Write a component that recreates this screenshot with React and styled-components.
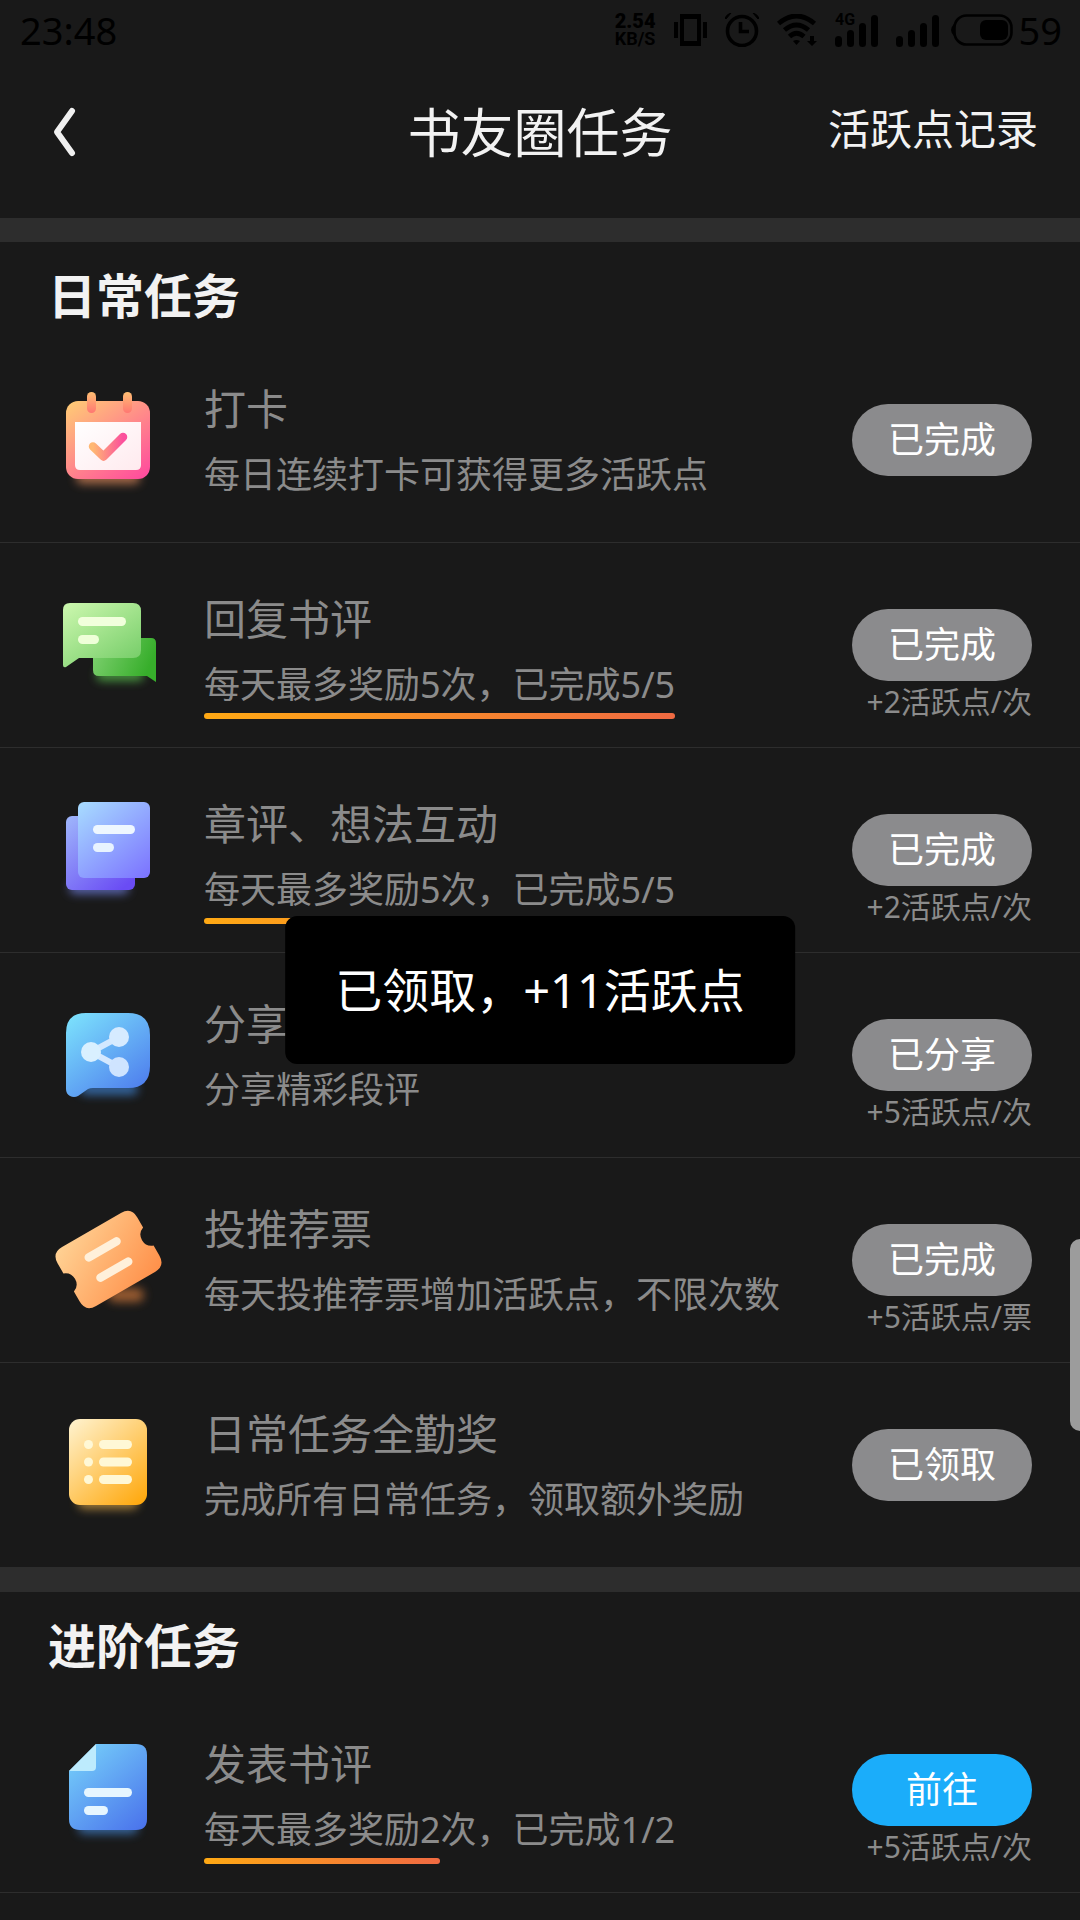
import styled, { createGlobalStyle } from "styled-components";

const dailyTasks = [
  {
    icon: CalendarIcon,
    title: "打卡",
    detail: "每日连续打卡可获得更多活跃点",
    action: "已完成",
  },
  {
    icon: ReplyIcon,
    title: "回复书评",
    detail: "每天最多奖励5次，已完成5/5",
    done: 5,
    total: 5,
    action: "已完成",
    reward: "+2活跃点/次",
  },
  {
    icon: ChapterIcon,
    title: "章评、想法互动",
    detail: "每天最多奖励5次，已完成5/5",
    done: 5,
    total: 5,
    action: "已完成",
    reward: "+2活跃点/次",
  },
  {
    icon: ShareIcon,
    title: "分享",
    detail: "分享精彩段评",
    action: "已分享",
    reward: "+5活跃点/次",
  },
  {
    icon: TicketIcon,
    title: "投推荐票",
    detail: "每天投推荐票增加活跃点，不限次数",
    action: "已完成",
    reward: "+5活跃点/票",
  },
  {
    icon: ListIcon,
    title: "日常任务全勤奖",
    detail: "完成所有日常任务，领取额外奖励",
    action: "已领取",
  },
];

const advancedTasks = [
  {
    icon: DocumentIcon,
    title: "发表书评",
    detail: "每天最多奖励2次，已完成1/2",
    done: 1,
    total: 2,
    action: "前往",
    reward: "+5活跃点/次",
    active: true,
  },
];

function App() {
  return (
    <Page>
      <GlobalStyle />
      <StatusBar />
      <Header>
        <BackButton type="button" aria-label="返回">
          <svg width="42" height="84" viewBox="0 0 42 84" fill="none">
            <path
              d="M30 20 L15 41 L30 62"
              stroke="#f0f0f0"
              strokeWidth="6"
              strokeLinecap="round"
              strokeLinejoin="round"
            />
          </svg>
        </BackButton>
        <PageTitle>书友圈任务</PageTitle>
        <RecordLink href="#records">活跃点记录</RecordLink>
      </Header>
      <main>
        <TaskSection title="日常任务" tasks={dailyTasks} />
        <TaskSection title="进阶任务" tasks={advancedTasks} />
      </main>
      <EdgeHandle />
      <Toast role="status">已领取，+11活跃点</Toast>
    </Page>
  );
}

export default App;

function TaskSection({ title, tasks }) {
  return (
    <Section>
      <SectionTitle>{title}</SectionTitle>
      <TaskList>
        {tasks.map((task) => (
          <TaskRow key={task.title} task={task} />
        ))}
      </TaskList>
    </Section>
  );
}

function TaskRow({ task }) {
  const Icon = task.icon;
  const hasProgress = task.total !== undefined;

  return (
    <Row>
      <IconBox>
        <Icon />
      </IconBox>
      <TaskText $hasProgress={hasProgress}>
        <TaskTitle>{task.title}</TaskTitle>
        <TaskDetail>{task.detail}</TaskDetail>
        {hasProgress && (
          <Track
            role="progressbar"
            aria-label={task.title}
            aria-valuenow={task.done}
            aria-valuemax={task.total}
          >
            <TrackFill style={{ width: `${(task.done / task.total) * 100}%` }} />
          </Track>
        )}
      </TaskText>
      <TaskAction>
        <ActionButton type="button" $active={task.active}>
          {task.action}
        </ActionButton>
        {task.reward && <Reward>{task.reward}</Reward>}
      </TaskAction>
    </Row>
  );
}

function StatusBar() {
  return (
    <StatusRow>
      <StatusText>23:48</StatusText>
      <StatusRight>
        <StatusIcons>
          <NetSpeed>
            <b>2.54</b>
            <span>KB/S</span>
          </NetSpeed>
          {/* vibrate */}
          <svg width="33" height="32" viewBox="0 0 33 32">
            <path
              fillRule="evenodd"
              d="M6 0H27V32H6Z M10 5V27H23V5Z M0 8H4V24H0Z M29 8H33V24H29Z"
            />
          </svg>
          {/* alarm */}
          <svg width="34" height="34" viewBox="0 0 34 34" fill="none" stroke="#000">
            <circle cx="17" cy="18" r="14.5" strokeWidth="3.6" />
            <path d="M15.5 9V18.5H24" strokeWidth="3.6" />
            <path
              d="M0 5Q2 1 6 0L1 6ZM34 5Q32 1 28 0L33 6Z"
              fill="#000"
              strokeWidth="1"
            />
          </svg>
          {/* wifi */}
          <svg width="40" height="32" viewBox="0 0 40 32" fill="none" stroke="#000">
            <path d="M1.5 9.5Q19.5 -5.5 37.5 9.5" strokeWidth="4.8" />
            <path d="M7.5 16Q19.5 6 31.5 16" strokeWidth="4.8" />
            <path d="M12.5 22.5Q19.5 16 27 22.5" strokeWidth="4.8" />
            <path d="M16 27Q19.5 25 23 27L19.5 31Z" fill="#000" stroke="none" />
            <path d="M33 22H37V27H40L35 32L30 27H33Z" fill="#000" stroke="none" />
          </svg>
          <Signal label="4G" />
          <Signal />
        </StatusIcons>
        <Battery>
          <svg width="62" height="32" viewBox="0 0 62 32">
            <rect
              x="3.5"
              y="1.5"
              width="57"
              height="29"
              rx="12"
              fill="none"
              stroke="#000"
              strokeWidth="2.6"
            />
            <path d="M3 10Q0 13 0 16Q0 19 3 22Z" />
            <rect x="29" y="6" width="28" height="20" rx="6" />
          </svg>
          <StatusText>59</StatusText>
        </Battery>
      </StatusRight>
    </StatusRow>
  );
}

function Signal({ label }) {
  return (
    <svg width="43" height="48" viewBox="0 -8 43 48">
      <rect x="0" y="22" width="7" height="11" rx="3.5" />
      <rect x="12" y="16" width="7" height="17" rx="3.5" />
      <rect x="24" y="9" width="7" height="24" rx="3.5" />
      <rect x="36" y="1" width="7" height="32" rx="3.5" />
      {label && (
        <text x="0" y="11" fontFamily="Roboto, sans-serif" fontSize="16" fontWeight="700">
          {label}
        </text>
      )}
    </svg>
  );
}

function IconFrame({ id, from, to, children }) {
  return (
    <svg width="108" height="108" viewBox="0 0 108 108" fill="none" overflow="visible">
      <defs>
        <linearGradient id={id} x1="0.1" y1="0" x2="0.9" y2="1">
          <stop offset="0" stopColor={from} />
          <stop offset="1" stopColor={to} />
        </linearGradient>
        <filter id={`${id}-glow`} x="-50%" y="-200%" width="200%" height="500%">
          <feGaussianBlur stdDeviation="5" />
        </filter>
      </defs>
      {children}
    </svg>
  );
}

function CalendarIcon() {
  return (
    <IconFrame id="calendar" from="#ffc876" to="#ff4c9d">
      <defs>
        <linearGradient id="calendar-ring" x1="0" y1="0" x2="0" y2="1">
          <stop offset="0" stopColor="#ffbe72" />
          <stop offset="1" stopColor="#ff7772" />
        </linearGradient>
        <linearGradient id="calendar-paper" x1="0" y1="0" x2="1" y2="1">
          <stop offset="0" stopColor="#ffffff" />
          <stop offset="1" stopColor="#ffeaee" />
        </linearGradient>
        <linearGradient id="calendar-check" x1="0" y1="0" x2="1" y2="0">
          <stop offset="0" stopColor="#ffb873" />
          <stop offset="1" stopColor="#fb4f9c" />
        </linearGradient>
      </defs>
      <rect
        x="22"
        y="84"
        width="64"
        height="14"
        rx="6"
        fill="#e08a5c"
        opacity="0.7"
        filter="url(#calendar-glow)"
      />
      <rect x="12" y="15" width="84" height="78" rx="12" fill="url(#calendar)" />
      <rect x="33" y="6" width="9" height="21" rx="4.5" fill="url(#calendar-ring)" />
      <rect x="69" y="6" width="9" height="21" rx="4.5" fill="url(#calendar-ring)" />
      <path d="M21 36H87V79Q87 84 82 84H26Q21 84 21 79Z" fill="url(#calendar-paper)" />
      <path
        d="M39 60.5L49.5 70.5L69 51"
        stroke="url(#calendar-check)"
        strokeWidth="8.5"
        strokeLinecap="round"
        strokeLinejoin="round"
      />
    </IconFrame>
  );
}

function ReplyIcon() {
  return (
    <IconFrame id="reply" from="#c9f6ac" to="#74cc67">
      <defs>
        <linearGradient id="reply-back" x1="0" y1="0" x2="1" y2="0.3">
          <stop offset="0" stopColor="#82d273" />
          <stop offset="1" stopColor="#37ae2b" />
        </linearGradient>
      </defs>
      <rect
        x="42"
        y="78"
        width="48"
        height="12"
        rx="6"
        fill="#5cc54f"
        opacity="0.7"
        filter="url(#reply-glow)"
      />
      <path
        d="M39 47H97Q102 47 102 52V91L93 85H45Q39 85 39 79Z"
        fill="url(#reply-back)"
      />
      <path
        d="M9 19Q9 12 16 12H79Q87 12 87 20V59Q87 67 79 67H25L12 76Q9 77 9 74Z"
        fill="url(#reply)"
      />
      <rect x="24" y="26" width="48" height="9" rx="4.5" fill="#f1ffdc" />
      <rect x="24" y="44" width="21" height="9" rx="4.5" fill="#eeffd8" />
    </IconFrame>
  );
}

function ChapterIcon() {
  return (
    <IconFrame id="chapter" from="#a6d8ff" to="#7d76ff">
      <defs>
        <linearGradient id="chapter-back" x1="0" y1="0" x2="0.8" y2="1">
          <stop offset="0" stopColor="#9fb7fb" />
          <stop offset="1" stopColor="#6a4cf4" />
        </linearGradient>
      </defs>
      <rect
        x="15"
        y="86"
        width="60"
        height="12"
        rx="6"
        fill="#7584ea"
        opacity="0.7"
        filter="url(#chapter-glow)"
      />
      <rect x="12" y="20" width="69" height="74" rx="6" fill="url(#chapter-back)" />
      <rect x="24" y="6" width="72" height="76" rx="6" fill="url(#chapter)" />
      <rect x="39" y="29" width="42" height="9" rx="4.5" fill="#eef7ff" />
      <rect x="39" y="47" width="21" height="9" rx="4.5" fill="#e8f3ff" />
    </IconFrame>
  );
}

function ShareIcon() {
  return (
    <IconFrame id="share" from="#7be0fc" to="#4c79ed">
      <rect
        x="26"
        y="82"
        width="58"
        height="12"
        rx="6"
        fill="#3f86d8"
        opacity="0.7"
        filter="url(#share-glow)"
      />
      <path
        d="M12 32Q12 12 32 12H74Q96 12 96 34V65Q96 87 74 87H39Q36 87 34 88L24 95Q20 97 16 95Q12 93 12 88Z"
        fill="url(#share)"
      />
      <path d="M65 36L37 51L65 66" stroke="#d3e8ff" strokeWidth="6" />
      <circle cx="37" cy="51" r="10" fill="#d9f0ff" />
      <circle cx="65" cy="36" r="10" fill="#d6ebff" />
      <circle cx="65" cy="66" r="10" fill="#cfe4ff" />
    </IconFrame>
  );
}

function TicketIcon() {
  return (
    <IconFrame id="ticket" from="#ffd092" to="#ff914b">
      <rect
        x="54"
        y="82"
        width="36"
        height="14"
        rx="7"
        fill="#d0783a"
        opacity="0.7"
        filter="url(#ticket-glow)"
      />
      <g transform="translate(54.5 53.5) rotate(-30)">
        <path
          d="M-34 -34H34Q46 -34 46 -22V-10.5A11.2 11.2 0 0 0 46 10.5V22Q46 34 34 34H-34Q-46 34 -46 22V10.5A11.2 11.2 0 0 0 -46 -10.5V-22Q-46 -34 -34 -34Z"
          fill="url(#ticket)"
        />
        <path
          d="M-16 -11.7H16M-16 11.7H16"
          stroke="#fff0da"
          strokeWidth="8.5"
          strokeLinecap="round"
        />
      </g>
    </IconFrame>
  );
}

function ListIcon() {
  const lines = [33.5, 51, 68.5];

  return (
    <IconFrame id="list" from="#fff0c8" to="#ffa90f">
      <rect
        x="24"
        y="84"
        width="60"
        height="14"
        rx="6"
        fill="#d9a548"
        opacity="0.7"
        filter="url(#list-glow)"
      />
      <rect x="15" y="8" width="78" height="86" rx="11" fill="url(#list)" />
      {lines.map((y) => (
        <g key={y} fill="#fff8d6">
          <circle cx="34.5" cy={y} r="4.5" />
          <rect x="45" y={y - 4.5} width="33" height="9" rx="4.5" />
        </g>
      ))}
    </IconFrame>
  );
}

function DocumentIcon() {
  return (
    <IconFrame id="document" from="#76d1fa" to="#4b75ec">
      <rect
        x="24"
        y="84"
        width="60"
        height="14"
        rx="6"
        fill="#4285d4"
        opacity="0.7"
        filter="url(#document-glow)"
      />
      <path
        d="M42 8H82Q93 8 93 19V83Q93 94 82 94H26Q15 94 15 83V35Z"
        fill="url(#document)"
      />
      <path d="M42 8V31Q42 35 38 35H15Z" fill="#bdebfd" />
      <rect x="30" y="52" width="48" height="9" rx="4.5" fill="#e6f6ff" />
      <rect x="30" y="70" width="24" height="9" rx="4.5" fill="#e6f6ff" />
    </IconFrame>
  );
}

const GlobalStyle = createGlobalStyle`
  * {
    box-sizing: border-box;
  }
  body {
    margin: 0;
    background-color: #191919;
    font-family: "Noto Sans", "Noto Sans CJK SC", sans-serif;
  }
  h1, h2, h3, p, ul {
    margin: 0;
    padding: 0;
  }
  button {
    border: none;
    padding: 0;
    font-family: inherit;
    cursor: pointer;
  }
  svg {
    display: block;
    flex-shrink: 0;
  }
`;

const Page = styled.div`
  min-height: 100vh;
  background-color: #191919;
`;

const StatusRow = styled.div`
  display: flex;
  align-items: center;
  justify-content: space-between;
  height: 60px;
  padding: 0 18px 0 20px;
  color: #000;
`;

const StatusText = styled.span`
  font-size: 38px;
  line-height: 60px;
`;

const StatusRight = styled.div`
  display: flex;
  align-items: center;
  gap: 12px;
`;

const StatusIcons = styled.div`
  display: flex;
  align-items: center;
  gap: 18px;
`;

const NetSpeed = styled.div`
  display: flex;
  flex-direction: column;
  align-items: center;
  font-family: Roboto, sans-serif;
  font-size: 18px;
  font-weight: 700;
  line-height: 18px;

  b {
    font-size: 20px;
  }
`;

const Battery = styled.div`
  display: flex;
  align-items: center;
  gap: 6px;
`;

const Header = styled.header`
  display: grid;
  grid-template-columns: 1fr auto 1fr;
  align-items: start;
  height: 158px;
  padding: 31px 42px 0;
`;

const BackButton = styled.button`
  justify-self: start;
  background: none;
`;

const PageTitle = styled.h1`
  color: #f2f2f2;
  font-size: 53px;
  font-weight: 400;
  line-height: 84px;
`;

const RecordLink = styled.a`
  justify-self: end;
  color: #f2f2f2;
  font-size: 42px;
  line-height: 76px;
  text-decoration: none;
`;

const Section = styled.section`
  border-top: 24px solid #2d2d2d;
`;

const SectionTitle = styled.h2`
  height: 96px;
  padding: 18px 48px 0;
  color: #f2f2f2;
  font-size: 48px;
  font-weight: 700;
  line-height: 72px;
`;

const TaskList = styled.ul`
  list-style: none;
`;

const Row = styled.li`
  display: flex;
  align-items: flex-start;
  height: 205px;
  padding: 0 48px 0 54px;
  border-bottom: 1px solid #2d2d2d;
`;

const IconBox = styled.div`
  padding-top: 48px;
  margin-right: 42px;
`;

const TaskText = styled.div`
  padding-top: ${(props) => (props.$hasProgress ? "49px" : "44px")};
  margin-right: auto;
  color: #8b8b8b;
  white-space: nowrap;
`;

const TaskTitle = styled.h3`
  margin-bottom: 12px;
  font-size: 42px;
  font-weight: 400;
  line-height: 54px;
`;

const TaskDetail = styled.p`
  font-size: 36px;
  line-height: 54px;
`;

const Track = styled.div`
  height: 6px;
  margin-top: 1px;
`;

const TrackFill = styled.div`
  height: 100%;
  border-radius: 3px;
  background: linear-gradient(to right, #ffa914, #f06a42);
`;

const TaskAction = styled.div`
  display: flex;
  flex-direction: column;
  align-items: flex-end;
  padding-top: 66px;
`;

const ActionButton = styled.button`
  width: 180px;
  height: 72px;
  border-radius: 36px;
  background-color: ${(props) => (props.$active ? "#1badfa" : "#8b8b8d")};
  color: #fff;
  font-size: 36px;
  line-height: 72px;
`;

const Reward = styled.p`
  color: #8b8b8b;
  font-size: 30px;
  line-height: 42px;
`;

const EdgeHandle = styled.div`
  position: fixed;
  top: 1239px;
  right: 0;
  width: 10px;
  height: 192px;
  border-radius: 10px 0 0 10px;
  background-color: #9c9c9c;
`;

const Toast = styled.div`
  position: fixed;
  top: 916px;
  left: 50%;
  transform: translateX(-50%);
  padding: 42px 50px;
  border-radius: 12px;
  background-color: #000;
  color: #fff;
  font-size: 47px;
  line-height: 64px;
  white-space: nowrap;
`;
